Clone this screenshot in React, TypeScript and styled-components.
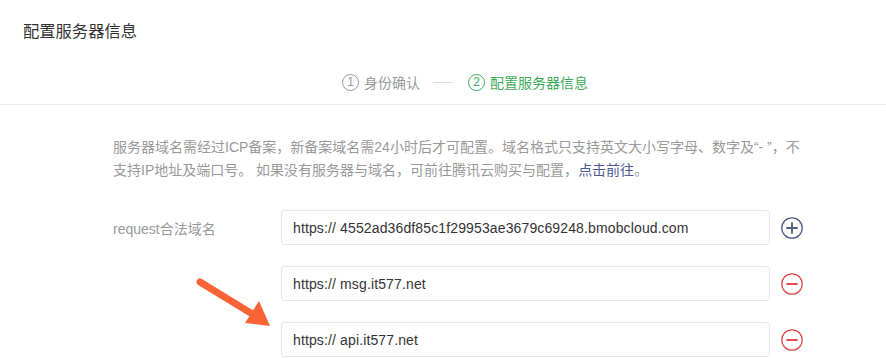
import React from 'react'
import styled, { createGlobalStyle } from 'styled-components'

const GlobalStyle = createGlobalStyle`
  html, body {
    margin: 0;
    padding: 0;
    background: #fff;
  }
  body {
    font-family: 'Liberation Sans', 'Noto Sans CJK SC', sans-serif;
    -webkit-font-smoothing: antialiased;
  }
`

const Page = styled.div`
  position: relative;
  width: 886px;
  height: 358px;
  overflow: hidden;
  background: #fff;
`

const Header = styled.div`
  padding: 20px 23px 0 23px;
  border-bottom: 1px solid #ebebeb;
`

const PageTitle = styled.h1`
  margin: 0;
  font-size: 16.3px;
  line-height: 22px;
  font-weight: normal;
  color: #333;
`

const Steps = styled.div`
  display: flex;
  align-items: center;
  height: 30px;
  margin-top: 25px;
  padding: 0 0 7px 319px;
`

const Step = styled.div<{ active?: boolean }>`
  display: flex;
  align-items: center;
  gap: 5px;
  font-size: 14px;
  color: ${(p) => (p.active ? '#3dab5a' : '#999')};
`

const StepNum = styled.span`
  display: inline-flex;
  align-items: center;
  justify-content: center;
  width: 15px;
  height: 15px;
  border: 1px solid currentColor;
  border-radius: 50%;
  font-size: 12px;
  line-height: 1;
`

const StepLine = styled.span`
  width: 20px;
  height: 1px;
  margin: 0 15px 0 13px;
  background: #dcdcdc;
`

const Body = styled.div`
  padding: 31px 0 0 113px;
`

const Notice = styled.p`
  margin: 0;
  width: 695px;
  font-size: 14px;
  line-height: 23px;
  color: #999;
`

const NoticeLink = styled.a`
  color: #4a5990;
  text-decoration: none;
`

const Form = styled.div`
  display: grid;
  grid-template-columns: 168px 489px auto;
  row-gap: 21px;
  align-items: center;
  margin-top: 28px;
`

const Label = styled.div`
  font-size: 14px;
  color: #999;
`

const DomainInput = styled.div`
  box-sizing: border-box;
  height: 35px;
  padding: 0 11px;
  display: flex;
  align-items: center;
  border: 1px solid #e6e6e6;
  border-radius: 3px;
  font-size: 14px;
  letter-spacing: 0.13px;
  color: #333;
`

const IconBtn = styled.span<{ tone: 'add' | 'remove' }>`
  display: inline-flex;
  width: 22px;
  height: 22px;
  margin-left: 11px;
  color: ${(p) => (p.tone === 'add' ? '#4f5b85' : '#e24c4c')};
`

const Arrow = styled.svg`
  position: absolute;
  left: 190px;
  top: 270px;
`

const CircleIcon = ({ plus }: { plus?: boolean }) => (
  <svg width='22' height='22' viewBox='0 0 22 22' fill='none'>
    <circle cx='11' cy='11' r='10.2' stroke='currentColor' strokeWidth='1.3' />
    <path d='M6 11h10' stroke='currentColor' strokeWidth='1.8' strokeLinecap='round' />
    {plus && <path d='M11 6v10' stroke='currentColor' strokeWidth='1.8' strokeLinecap='round' />}
  </svg>
)

const domains = [
  'https:// 4552ad36df85c1f29953ae3679c69248.bmobcloud.com',
  'https:// msg.it577.net',
  'https:// api.it577.net',
]

export default function App() {
  return (
    <Page>
      <GlobalStyle />
      <Header>
        <PageTitle>配置服务器信息</PageTitle>
        <Steps>
          <Step>
            <StepNum>1</StepNum>
            身份确认
          </Step>
          <StepLine />
          <Step active>
            <StepNum>2</StepNum>
            配置服务器信息
          </Step>
        </Steps>
      </Header>
      <Body>
        <Notice>
          服务器域名需经过ICP备案，新备案域名需24小时后才可配置。域名格式只支持英文大小写字母、数字及“- ”，不支持IP地址及端口号。
          如果没有服务器与域名，可前往腾讯云购买与配置，<NoticeLink>点击前往</NoticeLink>。
        </Notice>
        <Form>
          {domains.map((d, i) => (
            <React.Fragment key={d}>
              <Label>{i === 0 ? 'request合法域名' : ''}</Label>
              <DomainInput>{d}</DomainInput>
              <IconBtn tone={i === 0 ? 'add' : 'remove'}>
                <CircleIcon plus={i === 0} />
              </IconBtn>
            </React.Fragment>
          ))}
        </Form>
      </Body>
      <Arrow width='90' height='62' viewBox='0 0 90 62'>
        <path d='M10 12 L64 45' stroke='#fa6434' strokeWidth='7' strokeLinecap='round' />
        <path d='M80 56 L55 53 L69 31 Z' fill='#fa6434' />
      </Arrow>
    </Page>
  )
}
